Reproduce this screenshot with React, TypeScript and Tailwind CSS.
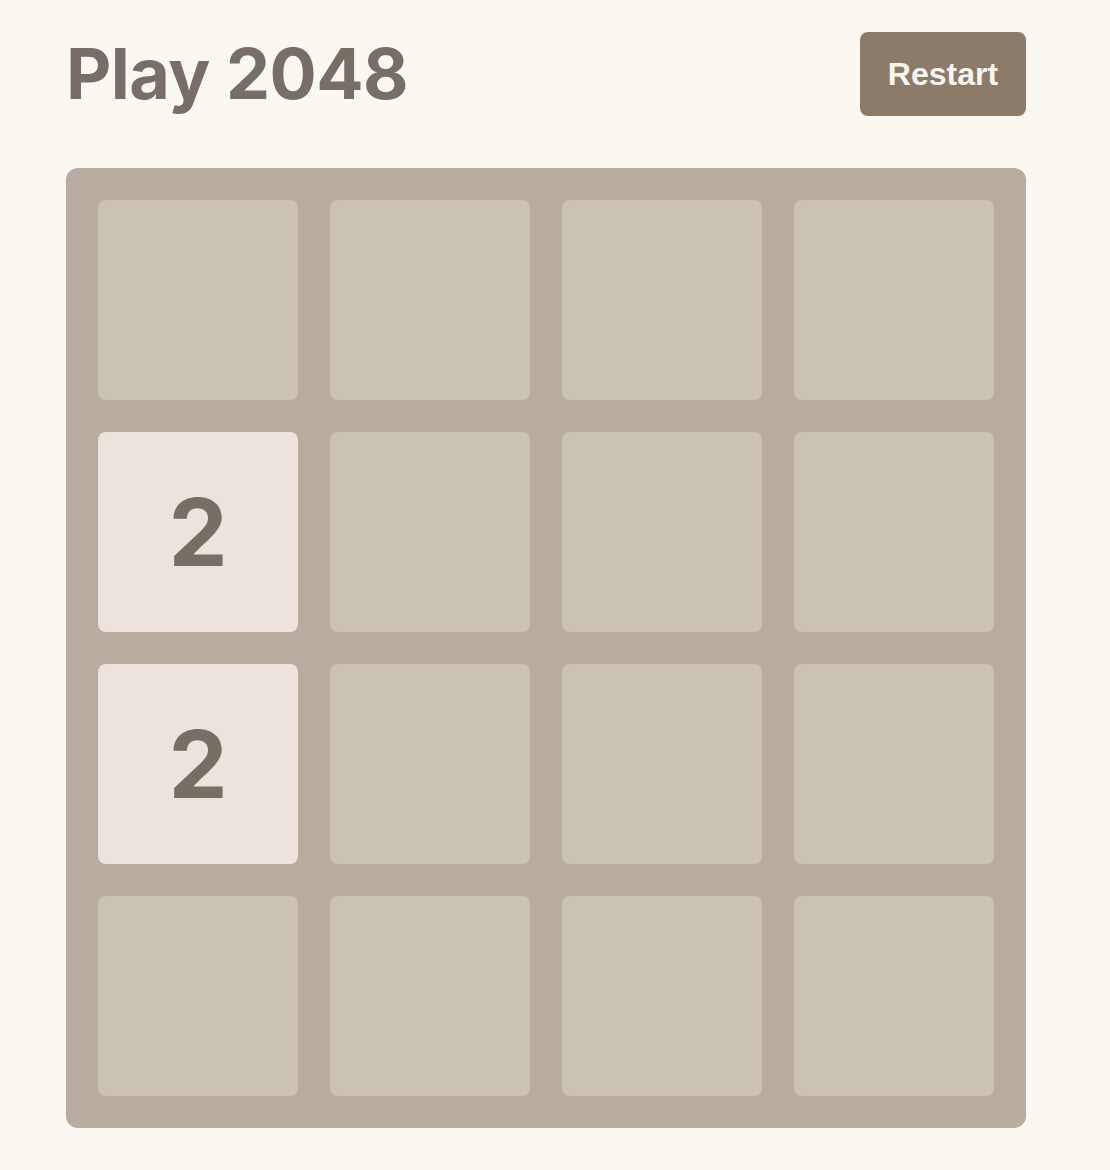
import React from "react";

const board: number[][] = [
  [0, 0, 0, 0],
  [2, 0, 0, 0],
  [2, 0, 0, 0],
  [0, 0, 0, 0],
];

export default function App() {
  return (
    <div className="min-h-[1170px] w-full bg-[#fbf8f1]">
      <div className="ml-[66px] w-[960px] pt-[32px]">
        <div className="flex h-[84px] items-center justify-between">
          <h1
            className="text-[70px] font-bold leading-none tracking-[-0.5px] text-[#776e65]"
            style={{ fontFamily: "Inter, 'Noto Sans', sans-serif" }}
          >
            Play 2048
          </h1>
          <button
            className="flex h-[84px] w-[166px] items-center justify-center rounded-[8px] bg-[#8d7b69] text-[32px] font-bold text-[#f9f6f2]"
            style={{ fontFamily: "'Liberation Sans', Arial, sans-serif" }}
          >
            Restart
          </button>
        </div>
        <div className="mt-[52px] grid grid-cols-4 gap-[32px] rounded-[12px] bg-[#b9ada1] p-[32px]">
          {board.flat().map((v, i) => (
            <div
              key={i}
              className={
                v
                  ? "flex h-[200px] w-[200px] items-center justify-center rounded-[8px] bg-[#ece4dc]"
                  : "h-[200px] w-[200px] rounded-[8px] bg-[#cac2b5]"
              }
            >
              {v ? (
                <span
                  className="text-[94px] font-bold leading-none text-[#776e65]"
                  style={{ fontFamily: "Inter, 'Noto Sans', sans-serif" }}
                >
                  {v}
                </span>
              ) : null}
            </div>
          ))}
        </div>
      </div>
    </div>
  );
}
